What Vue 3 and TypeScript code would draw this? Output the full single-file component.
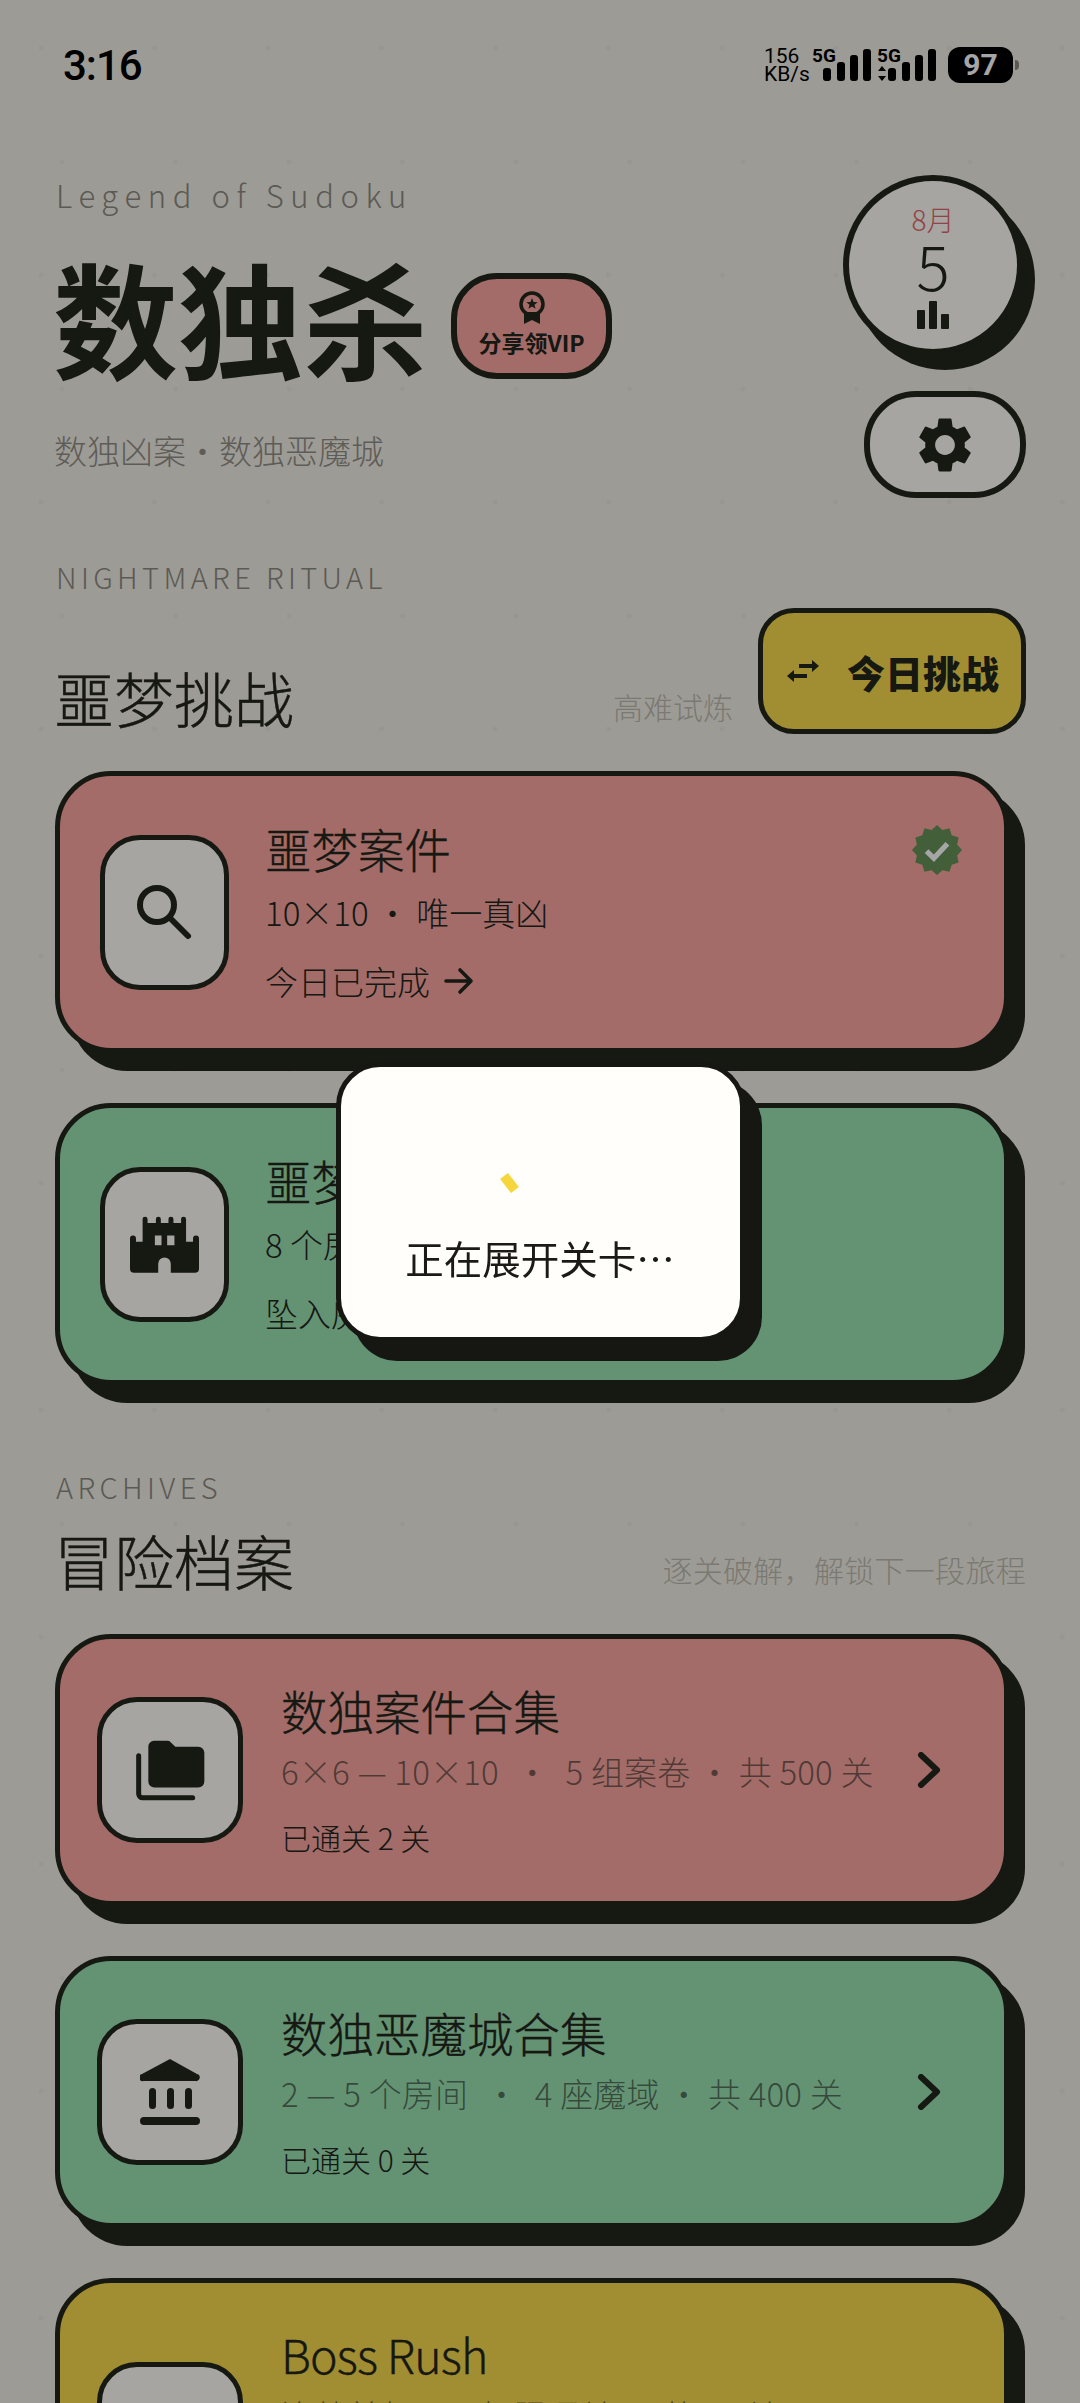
<template>
  <div class="page">
    <!-- status bar -->
    <div class="status">
      <span class="clock">3:16</span>
      <div class="status-right">
        <div class="speed">156<br />KB/s</div>
        <svg class="signal" width="60" height="36" viewBox="0 0 60 36">
          <text x="0" y="15" class="net">5G</text>
          <rect x="11" y="21" width="8" height="13" rx="3" />
          <rect x="25" y="15" width="8" height="19" rx="3" />
          <rect x="38" y="8" width="8" height="26" rx="3" />
          <rect x="51" y="2" width="8" height="32" rx="3" />
        </svg>
        <svg class="signal" width="60" height="36" viewBox="0 0 60 36">
          <text x="0" y="15" class="net">5G</text>
          <path d="M5 19l4 5H1zM5 34l4-5H1z" />
          <rect x="11" y="21" width="8" height="13" rx="3" />
          <rect x="25" y="15" width="8" height="19" rx="3" />
          <rect x="38" y="8" width="8" height="26" rx="3" />
          <rect x="51" y="2" width="8" height="32" rx="3" />
        </svg>
        <div class="battery">97</div>
        <div class="battery-nub"></div>
      </div>
    </div>

    <!-- header -->
    <header class="header">
      <div class="header-left">
        <div class="tagline">Legend of Sudoku</div>
        <div class="title-row">
          <h1 class="title">数独杀</h1>
          <div class="vip">
            <svg width="26" height="33" viewBox="0 0 26 33">
              <circle cx="13" cy="13" r="11" fill="none" stroke="#23251d" stroke-width="3.5" />
              <polygon :points="starPoints" fill="#23251d" />
              <path d="M5 21h16v12l-8-4-8 4z" fill="#23251d" />
            </svg>
            <span>分享领VIP</span>
          </div>
        </div>
        <div class="subtitle">数独凶案・数独恶魔城</div>
      </div>
      <div class="header-right">
        <div class="calendar">
          <span class="cal-month">8月</span>
          <span class="cal-day">5</span>
          <svg width="32" height="28" viewBox="0 0 32 28">
            <rect x="0" y="9" width="8" height="19" rx="1" fill="#23251d" />
            <rect x="12" y="0" width="8" height="28" rx="1" fill="#23251d" />
            <rect x="24" y="13" width="8" height="15" rx="1" fill="#23251d" />
          </svg>
        </div>
        <div class="settings">
          <svg width="66" height="66" viewBox="0 0 24 24">
            <path fill="#23251d" d="M19.14 12.94c.04-.3.06-.61.06-.94 0-.32-.02-.64-.07-.94l2.03-1.58c.18-.14.23-.41.12-.61l-1.92-3.32c-.12-.22-.37-.29-.59-.22l-2.39.96c-.5-.38-1.03-.7-1.62-.94l-.36-2.54c-.04-.24-.24-.41-.48-.41h-3.84c-.24 0-.43.17-.47.41l-.36 2.54c-.59.24-1.13.57-1.62.94l-2.39-.96c-.22-.08-.47 0-.59.22L2.74 8.87c-.12.21-.08.47.12.61l2.03 1.58c-.05.3-.09.63-.09.94s.02.64.07.94l-2.03 1.58c-.18.14-.23.41-.12.61l1.92 3.32c.12.22.37.29.59.22l2.39-.96c.5.38 1.03.7 1.62.94l.36 2.54c.05.24.24.41.48.41h3.84c.24 0 .44-.17.47-.41l.36-2.54c.59-.24 1.13-.56 1.62-.94l2.39.96c.22.08.47 0 .59-.22l1.92-3.32c.12-.22.07-.47-.12-.61l-2.01-1.58zM12 15.6c-1.98 0-3.6-1.62-3.6-3.6s1.62-3.6 3.6-3.6 3.6 1.62 3.6 3.6-1.62 3.6-3.6 3.6z" />
          </svg>
        </div>
      </div>
    </header>

    <!-- nightmare section -->
    <div class="eyebrow first">NIGHTMARE RITUAL</div>
    <div class="section-head with-btn">
      <h2 class="section-title">噩梦挑战</h2>
      <span class="section-note">高难试炼</span>
      <div class="today-btn">
        <svg width="32" height="22" viewBox="0 0 32 22">
          <path d="M12 6h15" stroke="#23251d" stroke-width="4" />
          <path d="M25 0l7 6-7 6z" fill="#23251d" />
          <path d="M5 16h15" stroke="#23251d" stroke-width="4" />
          <path d="M7 10l-7 6 7 6z" fill="#23251d" />
        </svg>
        <span>今日挑战</span>
      </div>
    </div>

    <div class="cards">
      <div class="card ritual rose">
        <div class="icon-box big">
          <svg width="64" height="64" viewBox="0 0 64 64" fill="none" stroke="#23251d" stroke-width="6" stroke-linecap="round">
            <circle cx="24" cy="25" r="17" />
            <path d="M37 38l18 18" />
          </svg>
        </div>
        <div class="text">
          <div class="card-title">噩梦案件</div>
          <div class="card-sub">10×10 ・ 唯一真凶</div>
          <div class="card-foot">今日已完成
            <svg class="arrow" width="30" height="28" viewBox="0 0 30 28" fill="none" stroke="#23251d" stroke-width="3.6" stroke-linecap="round" stroke-linejoin="round">
              <path d="M2 14h25M16 3l11 11-11 11" />
            </svg>
          </div>
        </div>
        <svg class="done" width="50" height="50" viewBox="0 0 48 48">
          <polygon :points="sealPoints" fill="#66925a" />
          <path d="M14 25l7 7 13-14" fill="none" stroke="#fff" stroke-width="5" />
        </svg>
      </div>

      <div class="card ritual green">
        <div class="icon-box big">
          <svg width="69" height="57" viewBox="150 195 208 170">
            <path fill="#23251d" fill-rule="evenodd" d="M150 262a9 9 0 0 1 18 0v10h20v-68a7.5 7.5 0 0 1 15 0v11h25v-11a7.5 7.5 0 0 1 15 0v11h23v-11a7.5 7.5 0 0 1 15 0v11h23v-11a7.5 7.5 0 0 1 15 0v68h21v-10a9 9 0 0 1 18 0v91a12 12 0 0 1-12 12h-73v-27a19 19 0 0 0-38 0v27h-73a12 12 0 0 1-12-12zM225 253h20v29h-20zM262 253h22v29h-22z" />
          </svg>
        </div>
        <div class="text">
          <div class="card-title">噩梦恶魔城</div>
          <div class="card-sub">8 个房间</div>
          <div class="card-foot">坠入房间</div>
        </div>
      </div>
    </div>

    <!-- archive section -->
    <div class="eyebrow second">ARCHIVES</div>
    <div class="section-head">
      <h2 class="section-title">冒险档案</h2>
      <span class="section-note wide">逐关破解，解锁下一段旅程</span>
    </div>

    <div class="cards">
      <div v-for="item in archives" :key="item.title" class="card archive" :class="[item.color, { tall: item.tall }]">
        <div class="icon-box">
          <svg v-if="item.icon === 'folder'" width="70" height="61" viewBox="165 175 210 182">
            <path fill="#23251d" d="M222 177h40a14 14 0 0 1 10 4l14 14h69a18 18 0 0 1 18 18v86a18 18 0 0 1-18 18H223a18 18 0 0 1-18-18V194a17 17 0 0 1 17-17z" />
            <path fill="none" stroke="#23251d" stroke-width="15" stroke-linecap="round" d="M176 222v114a12 12 0 0 0 12 12h150" />
          </svg>
          <svg v-else-if="item.icon === 'bank'" width="60" height="66" viewBox="0 0 60 66">
            <path fill="#23251d" d="M30 0l27 15a3.5 3.5 0 0 1-1.700 7H3.700a3.500 3.500 0 0 1-1.700-7z" />
            <rect x="9" y="29" width="7" height="21" rx="3.500" fill="#23251d" />
            <rect x="27" y="29" width="7" height="21" rx="3.500" fill="#23251d" />
            <rect x="45" y="29" width="7" height="21" rx="3.500" fill="#23251d" />
            <rect x="0" y="58" width="60" height="8" rx="4" fill="#23251d" />
          </svg>
        </div>
        <div class="text">
          <div class="card-title">{{ item.title }}</div>
          <div class="card-sub faded">{{ item.sub }}</div>
          <div class="card-foot small">{{ item.foot }}</div>
        </div>
        <svg class="chevron" width="24" height="36" viewBox="0 0 24 36" fill="none" stroke="#23251d" stroke-width="6" stroke-linecap="round" stroke-linejoin="round">
          <path d="M4 3l16 15L4 33" />
        </svg>
      </div>
    </div>

    <!-- loading dialog -->
    <div class="overlay">
      <div class="dialog">
        <svg class="spinner" width="80" height="80" viewBox="0 0 80 80">
          <path d="M4 56l11 14" stroke="#f5d63d" stroke-width="10" />
        </svg>
        <div class="dialog-text">正在展开关卡…</div>
      </div>
    </div>
  </div>
</template>

<script setup lang="ts">
interface Archive {
  title: string
  sub: string
  foot: string
  color: string
  icon: string
  tall?: boolean
}

const archives: Archive[] = [
  { title: '数独案件合集', sub: '6×6 — 10×10\u2002・\u20025 组案卷 ・ 共 500 关', foot: '已通关 2 关', color: 'rose', icon: 'folder' },
  { title: '数独恶魔城合集', sub: '2 — 5 个房间\u2002・\u20024 座魔域 ・ 共 400 关', foot: '已通关 0 关', color: 'green', icon: 'bank' },
  { title: 'Boss Rush', sub: '连战首领\u2002・\u2002极限通关 ・ 共 50 关', foot: '已通关 0 关', color: 'yellow', icon: 'none', tall: true }
]

function starburst(cx: number, cy: number, outer: number, inner: number, tips: number): string {
  const pts: string[] = []
  for (let i = 0; i < tips * 2; i++) {
    const r = i % 2 === 0 ? outer : inner
    const a = (Math.PI * i) / tips - Math.PI / 2
    pts.push(`${(cx + r * Math.cos(a)).toFixed(2)},${(cy + r * Math.sin(a)).toFixed(2)}`)
  }
  return pts.join(' ')
}

const starPoints = starburst(13, 13, 6, 2.6, 5)
const sealPoints = starburst(24, 24, 24, 20, 12)
</script>

<style>
html,
body {
  margin: 0;
  background: #f2efe5;
}
</style>

<style scoped>
.page {
  position: relative;
  width: 1080px;
  height: 2403px;
  overflow: hidden;
  box-sizing: border-box;
  padding: 0 54px 0 55px;
  background-color: #f2efe5;
  background-image:
    radial-gradient(circle at 41px 48px, rgba(0, 0, 0, 0.035) 2px, transparent 3px),
    radial-gradient(circle at 62px 162px, rgba(0, 0, 0, 0.035) 2px, transparent 3px);
  background-size: 113.5px 227px;
  font-family: "Noto Sans CJK SC", "Noto Sans", sans-serif;
  font-weight: 300;
  color: #23251d;
}

/* status bar */
.status {
  height: 130px;
  display: flex;
  align-items: center;
  justify-content: space-between;
  padding: 0 0 0 8px;
}
.clock {
  font-family: Roboto, sans-serif;
  font-size: 42px;
  font-weight: 500;
  letter-spacing: -1px;
  color: #000;
}
.status-right {
  display: flex;
  align-items: center;
  margin-right: 7px;
}
.speed {
  font-family: Roboto, sans-serif;
  font-size: 21px;
  line-height: 18px;
  font-weight: 400;
  color: #000;
  margin-right: 6px;
  width: 42px;
}
.signal {
  margin-right: 5px;
}
.net {
  font-family: Roboto, sans-serif;
  font-size: 19px;
  font-weight: 700;
}
.battery {
  width: 65px;
  height: 36px;
  margin-left: 6px;
  border-radius: 12px;
  background: #000;
  color: #fff;
  font-family: Roboto, sans-serif;
  font-size: 30px;
  font-weight: 700;
  line-height: 36px;
  text-align: center;
}
.battery-nub {
  width: 4px;
  height: 10px;
  margin-left: 2px;
  border-radius: 0 4px 4px 0;
  background: #8a8880;
}

/* header */
.header {
  display: flex;
  justify-content: space-between;
  margin-top: 45px;
}
.tagline {
  font-size: 31px;
  line-height: 40px;
  letter-spacing: 6.6px;
  color: #8c8a82;
  padding-left: 1px;
}
.title-row {
  display: flex;
  align-items: center;
  margin-top: 41px;
  height: 130px;
}
.title {
  margin: 0 0 0 -2px;
  font-size: 125px;
  line-height: 130px;
  font-weight: 700;
  transform: translateY(-5px);
}
.vip {
  box-sizing: border-box;
  width: 161px;
  height: 106px;
  margin-left: 23px;
  margin-top: 10px;
  border: 6px solid #23251d;
  border-radius: 46px;
  background: #fba6a0;
  display: flex;
  flex-direction: column;
  align-items: center;
  padding-top: 12px;
}
.vip span {
  font-size: 23px;
  line-height: 30px;
  font-weight: 700;
  margin-top: 3px;
}
.subtitle {
  margin: 42px 0 0 -1px;
  font-size: 33px;
  line-height: 44px;
  color: #918e87;
}
.header-right {
  display: flex;
  flex-direction: column;
  align-items: flex-end;
  gap: 36px;
}
.calendar {
  box-sizing: border-box;
  width: 180px;
  height: 180px;
  margin-right: 3px;
  border: 6px solid #23251d;
  border-radius: 50%;
  background: #fffdf7;
  box-shadow: 12px 15px 0 #23251d;
  display: flex;
  flex-direction: column;
  align-items: center;
  padding-top: 23px;
}
.cal-month {
  font-size: 28px;
  line-height: 30px;
  color: #e0686c;
}
.cal-day {
  margin-top: 4px;
  font-size: 62px;
  line-height: 52px;
  font-weight: 300;
}
.calendar svg {
  margin-top: 11px;
}
.settings {
  box-sizing: border-box;
  width: 162px;
  height: 107px;
  border: 6px solid #23251d;
  border-radius: 52px;
  background: #fffdf7;
  display: flex;
  align-items: center;
  justify-content: center;
}

/* section heads */
.eyebrow {
  font-size: 29px;
  line-height: 40px;
  letter-spacing: 4.4px;
  color: #8c8a82;
  padding-left: 1px;
}
.eyebrow.first {
  margin-top: 58px;
}
.eyebrow.second {
  margin-top: 81px;
}
.section-head {
  display: flex;
  align-items: flex-end;
  margin-top: 17px;
}
.section-head.with-btn {
  margin-top: 12px;
}
.section-title {
  flex: 1;
  margin: 0 0 0 -1px;
  font-size: 60px;
  line-height: 74px;
  font-weight: 300;
  -webkit-text-stroke: 0.4px #23251d;
}
.section-note {
  font-size: 30px;
  line-height: 44px;
  margin-bottom: 6px;
  color: #bdbab0;
}
.section-note.wide {
  letter-spacing: 0.3px;
}
.today-btn {
  box-sizing: border-box;
  width: 268px;
  height: 126px;
  margin-left: 25px;
  padding-left: 24px;
  border: 5px solid #23251d;
  border-radius: 36px;
  background: #f8d94e;
  display: flex;
  align-items: center;
  gap: 28px;
}
.today-btn span {
  font-size: 38px;
  font-weight: 900;
}

/* cards */
.cards {
  display: flex;
  flex-direction: column;
  gap: 50px;
  margin-top: 37px;
  margin-right: 17px;
}
.card {
  position: relative;
  box-sizing: border-box;
  display: flex;
  align-items: center;
  padding: 42px 63px 42px 37px;
  border: 5px solid #23251d;
  border-radius: 56px;
  box-shadow: 16px 18px 0 #23251d;
}
.card.ritual {
  padding-left: 40px;
}
.rose {
  background: #fba6a0;
}
.green {
  background: #9ae2b3;
}
.yellow {
  background: #f8d94e;
}
.icon-box {
  box-sizing: border-box;
  flex: none;
  width: 146px;
  height: 146px;
  border: 5px solid #23251d;
  border-radius: 40px;
  background: #fffdf7;
  display: flex;
  align-items: center;
  justify-content: center;
}
.icon-box.big {
  width: 129px;
  height: 155px;
}
.text {
  flex: 1;
  min-width: 0;
  margin-left: 38px;
}
.ritual .text {
  margin-left: 36px;
  padding-bottom: 3px;
}
.tall .text {
  min-height: 220px;
}
.card-title {
  font-size: 46.5px;
  line-height: 58px;
  margin-bottom: 2px;
  -webkit-text-stroke: 0.35px #23251d;
}
.ritual .card-title {
  line-height: 59px;
  margin-bottom: 5px;
}
.tall .card-title {
  letter-spacing: -0.8px;
}
.card-sub {
  font-size: 33px;
  line-height: 60px;
  white-space: nowrap;
}
.card-sub.faded {
  letter-spacing: 0.2px;
  color: rgba(35, 37, 29, 0.6);
}
.card-foot {
  display: flex;
  align-items: center;
  margin-top: 17px;
  font-size: 33px;
  line-height: 44px;
}
.card-foot.small {
  margin-top: 14px;
  font-size: 30px;
}
.arrow {
  margin-left: 14px;
}
.done {
  position: absolute;
  top: 49px;
  right: 42px;
}
.chevron {
  flex: none;
}

/* loading dialog */
.overlay {
  position: fixed;
  inset: 0;
  background: rgba(0, 0, 0, 0.35);
  display: flex;
  align-items: center;
  justify-content: center;
}
.dialog {
  box-sizing: border-box;
  width: 409px;
  height: 280px;
  border: 5px solid #161712;
  border-radius: 44px;
  background: #fffefa;
  box-shadow: 17px 19px 0 #161712;
  display: flex;
  flex-direction: column;
  align-items: center;
  justify-content: center;
}
.dialog-text {
  margin-top: 30px;
  font-size: 38.5px;
  line-height: 54px;
  font-weight: 400;
  color: #1a1a16;
}
</style>
